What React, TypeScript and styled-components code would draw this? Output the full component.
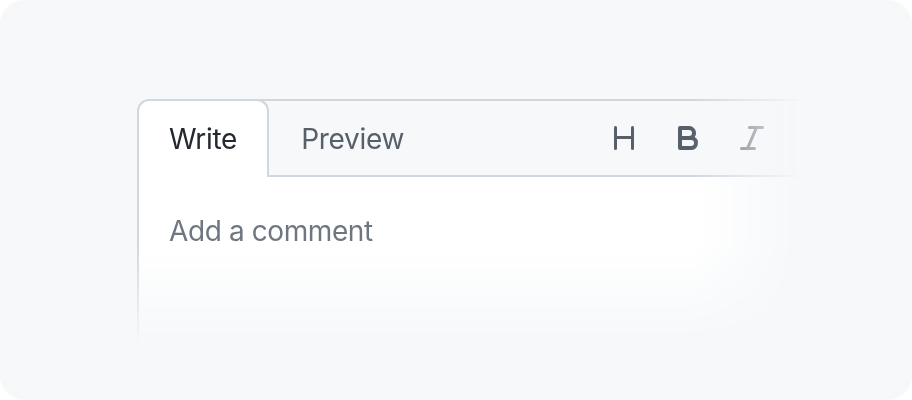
import React, {FC} from "react";
import styled, {createGlobalStyle} from "styled-components";

const GlobalStyle = createGlobalStyle`
  html, body {
    margin: 0;
    padding: 0;
    background: #ffffff;
  }
  body {
    font-family: Inter, "Noto Sans", "Liberation Sans", sans-serif;
  }
`;

const colors = {
  canvas: "#f6f8fa",
  border: "#d0d7de",
  fg: "#24292f",
  muted: "#57606a",
  placeholder: "#6e7781",
};

// fades the box out towards the right and the bottom
const fadeRight = "linear-gradient(to right, #000 555px, transparent 665px)";
const fadeDown = "linear-gradient(to bottom, #000 145px, transparent 245px)";

const Card = styled.div`
  width: 912px;
  height: 400px;
  box-sizing: border-box;
  padding: 99px 0 0 137px;
  background: ${colors.canvas};
  border-radius: 24px;
  overflow: hidden;
`;

const Editor = styled.div`
  width: 760px;
  height: 300px;
  box-sizing: border-box;
  display: flex;
  flex-direction: column;
  background: #ffffff;
  border: 2px solid ${colors.border};
  border-radius: 12px;
  -webkit-mask-image: ${fadeRight}, ${fadeDown};
  -webkit-mask-composite: source-in;
  mask-image: ${fadeRight}, ${fadeDown};
  mask-composite: intersect;
`;

const Header = styled.div`
  display: flex;
  align-items: stretch;
  height: 76px;
  box-sizing: border-box;
  background: ${colors.canvas};
  border-bottom: 2px solid ${colors.border};
  border-radius: 10px 10px 0 0;
`;

const Tabs = styled.div`
  display: flex;
`;

const Tab = styled.button<{ $active?: boolean }>`
  display: flex;
  align-items: center;
  height: 78px;
  box-sizing: border-box;
  margin: -2px 0 -2px 0;
  padding: 0 30px;
  font-family: inherit;
  font-size: 28px;
  line-height: 40px;
  letter-spacing: -0.3px;
  color: ${p => p.$active ? colors.fg : colors.muted};
  background: ${p => p.$active ? "#ffffff" : "transparent"};
  border: 2px solid ${p => p.$active ? colors.border : "transparent"};
  border-bottom: 0;
  border-radius: 12px 12px 0 0;
  cursor: pointer;

  &:first-child {
    margin-left: -2px;
  }
`;

const Toolbar = styled.div`
  display: flex;
  align-items: center;
  margin-left: 156px;
`;

const ToolButton = styled.button`
  display: flex;
  align-items: center;
  justify-content: center;
  width: 64px;
  height: 48px;
  padding: 0;
  color: ${colors.muted};
  background: transparent;
  border: 0;
  cursor: pointer;

  svg {
    width: 32px;
    height: 32px;
    fill: currentColor;
  }
`;

const Body = styled.div`
  flex: 1;
  padding: 16px;
  display: flex;
`;

const Textarea = styled.textarea`
  flex: 1;
  resize: none;
  border: 0;
  outline: none;
  background: transparent;
  padding: 18px 14px;
  font-family: inherit;
  font-size: 28px;
  line-height: 40px;
  letter-spacing: -0.4px;
  color: ${colors.fg};

  &::placeholder {
    color: ${colors.placeholder};
    opacity: 1;
  }
`;

const HeadingIcon: FC = () => (
  <svg viewBox="0 0 16 16" aria-hidden="true">
    <path d="M3.75 2a.75.75 0 0 1 .75.75V7h7V2.75a.75.75 0 0 1 1.5 0v10.5a.75.75 0 0 1-1.5 0V8.5h-7v4.75a.75.75 0 0 1-1.5 0V2.75A.75.75 0 0 1 3.75 2Z"/>
  </svg>
);

const BoldIcon: FC = () => (
  <svg viewBox="0 0 16 16" aria-hidden="true">
    <path d="M4 2h4.5a3.5 3.5 0 0 1 2.852 5.53A3.499 3.499 0 0 1 9.5 14H4a1 1 0 0 1-1-1V3a1 1 0 0 1 1-1Zm1 7v3h4.5a1.5 1.5 0 0 0 0-3Zm3.5-2a1.5 1.5 0 0 0 0-3H5v3Z"/>
  </svg>
);

const ItalicIcon: FC = () => (
  <svg viewBox="0 0 16 16" aria-hidden="true">
    <path d="M6 2.75A.75.75 0 0 1 6.75 2h6.5a.75.75 0 0 1 0 1.5h-2.505l-3.858 9H9.25a.75.75 0 0 1 0 1.5h-6.5a.75.75 0 0 1 0-1.5h2.505l3.858-9H6.75A.75.75 0 0 1 6 2.75Z"/>
  </svg>
);

const App: FC = () => {
  return (
    <>
      <GlobalStyle/>
      <Card>
        <Editor>
          <Header>
            <Tabs>
              <Tab $active>Write</Tab>
              <Tab>Preview</Tab>
            </Tabs>
            <Toolbar>
              <ToolButton aria-label="Heading"><HeadingIcon/></ToolButton>
              <ToolButton aria-label="Bold"><BoldIcon/></ToolButton>
              <ToolButton aria-label="Italic"><ItalicIcon/></ToolButton>
            </Toolbar>
          </Header>
          <Body>
            <Textarea placeholder="Add a comment"/>
          </Body>
        </Editor>
      </Card>
    </>
  );
};

export default App;
